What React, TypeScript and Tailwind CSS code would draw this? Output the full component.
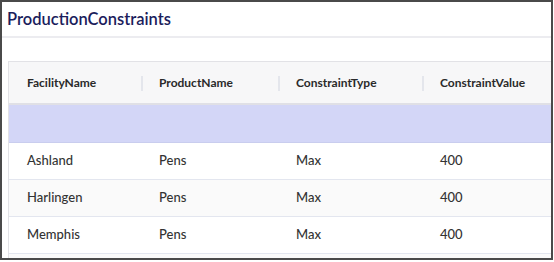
import React from "react";

const rows = [
  { facility: "Ashland", product: "Pens", type: "Max", value: "400" },
  { facility: "Harlingen", product: "Pens", type: "Max", value: "400" },
  { facility: "Memphis", product: "Pens", type: "Max", value: "400" },
  { facility: "", product: "", type: "", value: "" },
];

const headers = ["FacilityName", "ProductName", "ConstraintType", "ConstraintValue"];
const cols = "grid grid-cols-[134px_137px_144px_160px]";

export default function App() {
  return (
    <div
      className="w-[553px] h-[260px] border-2 border-[#4a4a4a] bg-white overflow-hidden"
      style={{ fontFamily: 'Lato, "Open Sans", sans-serif' }}
    >
      <div className="h-[36px] pl-[5px] pt-[6px] border-b-2 border-[#ececf0]">
        <h1 className="text-[16.5px] leading-[22px] font-semibold text-[#1b1d5c]">ProductionConstraints</h1>
      </div>
      <div className="pl-[6px] pt-[23px]">
        <div className="w-[600px] border-l border-t border-[#e2e2e6]">
          <div className={`${cols} h-[43px] bg-[#f7f7f8] border-b-2 border-[#e0e0e6] items-center`}>
            {headers.map((h, i) => (
              <div key={h} className="relative h-full flex items-center">
                <span
                  className={`text-[12px] font-bold text-[#2a2a2a] ${i === 0 ? "pl-[18px]" : "pl-[16px]"}`}
                >
                  {h}
                </span>
                {i < 3 && (
                  <span className="absolute right-0 top-[14px] h-[15px] w-[2px] bg-[#e4e6ec]" />
                )}
              </div>
            ))}
          </div>
          <div className="h-[38px] bg-[#d3d6f7] border-b border-[#c9cdee]" />
          {rows.map((r, i) => (
            <div
              key={i}
              className={`${cols} h-[37px] items-center border-b border-[#e3e6ef] text-[13px] font-medium text-[#333] ${
                i % 2 === 1 ? "bg-[#fafafa]" : "bg-white"
              }`}
            >
              <span className="pl-[18px]">{r.facility}</span>
              <span className="pl-[16px]">{r.product}</span>
              <span className="pl-[16px]">{r.type}</span>
              <span className="pl-[16px]">{r.value}</span>
            </div>
          ))}
        </div>
      </div>
    </div>
  );
}
